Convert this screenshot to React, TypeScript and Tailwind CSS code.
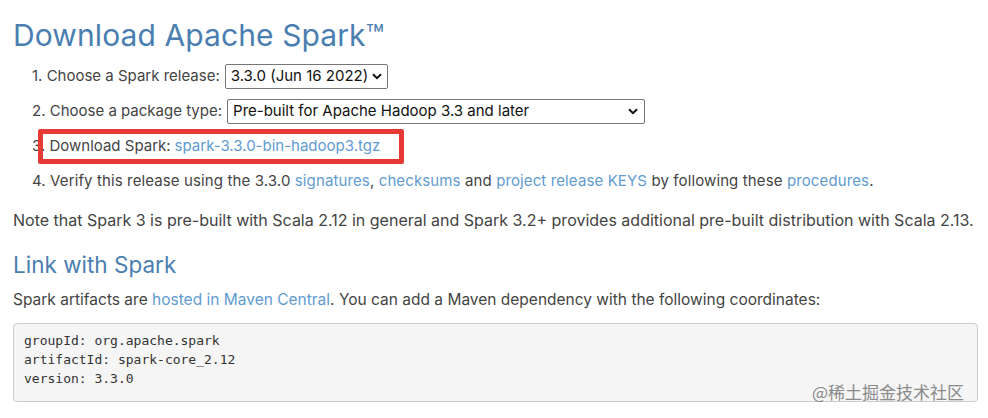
import React from "react";

const Chevron = () => (
  <svg width="10" height="7" viewBox="0 0 10 7" className="shrink-0">
    <path d="M1 1.2 L5 5.2 L9 1.2" fill="none" stroke="#111" strokeWidth="2" />
  </svg>
);

const A = ({ children }: { children: React.ReactNode }) => (
  <a className="text-[#5f9bd1]">{children}</a>
);

export default function App() {
  return (
    <div
      className="w-[988px] h-[418px] bg-white overflow-hidden text-[#333] relative"
      style={{ fontFamily: "Inter, 'Noto Sans', sans-serif" }}
    >
      <div className="pl-[13px] pt-[17px]">
        <h1 className="text-[30px] leading-[36px] text-[#4a7eb0] tracking-[0.1px]">
          Download Apache Spark™
        </h1>
        <ol className="mt-[6px] pl-[19px] text-[15px] text-[#444]">
          <li className="h-[35px] flex items-center">
            <span>1. Choose a Spark release:</span>
            <span className="ml-[5px] h-[25px] w-[163px] border border-[#767676] rounded-[2px] flex items-center justify-between pl-[5px] pr-[5px] text-[#111]">
              3.3.0 (Jun 16 2022)
              <Chevron />
            </span>
          </li>
          <li className="h-[35px] flex items-center">
            <span>2. Choose a package type:</span>
            <span className="ml-[5px] h-[25px] w-[418px] border border-[#767676] rounded-[2px] flex items-center justify-between pl-[5px] pr-[6px] text-[#111]">
              Pre-built for Apache Hadoop 3.3 and later
              <Chevron />
            </span>
          </li>
          <li className="h-[35px] flex items-center relative">
            <span>3. Download Spark: </span>
            <span className="ml-[4px]">
              <A>spark-3.3.0-bin-hadoop3.tgz</A>
            </span>
            <div className="absolute left-[6px] top-[0px] w-[366px] h-[35px] border-[5px] border-[#e53a36] rounded-[2px]" />
          </li>
          <li className="h-[35px] flex items-center whitespace-nowrap tracking-[0.12px]">
            <span>
              4. Verify this release using the 3.3.0 <A>signatures</A>,{" "}
              <A>checksums</A> and <A>project release KEYS</A> by following these{" "}
              <A>procedures</A>.
            </span>
          </li>
        </ol>
        <p className="mt-[9px] text-[16px] text-[#444] whitespace-nowrap">
          Note that Spark 3 is pre-built with Scala 2.12 in general and Spark 3.2+ provides additional pre-built distribution with Scala 2.13.
        </p>
        <h2 className="mt-[18px] text-[22.5px] leading-[30px] text-[#4a7eb0]">
          Link with Spark
        </h2>
        <p className="mt-[8px] text-[15.5px] text-[#444] whitespace-nowrap">
          Spark artifacts are <A>hosted in Maven Central</A>. You can add a Maven dependency with the following coordinates:
        </p>
        <pre
          className="mt-[12px] w-[965px] h-[79px] bg-[#f5f5f5] border border-[#ccc] rounded-[4px] pl-[10px] pt-[7px] text-[13px] leading-[19px] text-[#333]"
          style={{ fontFamily: "'DejaVu Sans Mono', 'Liberation Mono', monospace" }}
        >
{`groupId: org.apache.spark
artifactId: spark-core_2.12
version: 3.3.0`}
        </pre>
      </div>
      <div
        className="absolute left-[812px] top-[381px] text-[17px] leading-[22px] text-[#8a8a8a]"
        style={{ fontFamily: "'Noto Sans CJK SC', sans-serif" }}
      >
        @稀土掘金技术社区
      </div>
    </div>
  );
}
